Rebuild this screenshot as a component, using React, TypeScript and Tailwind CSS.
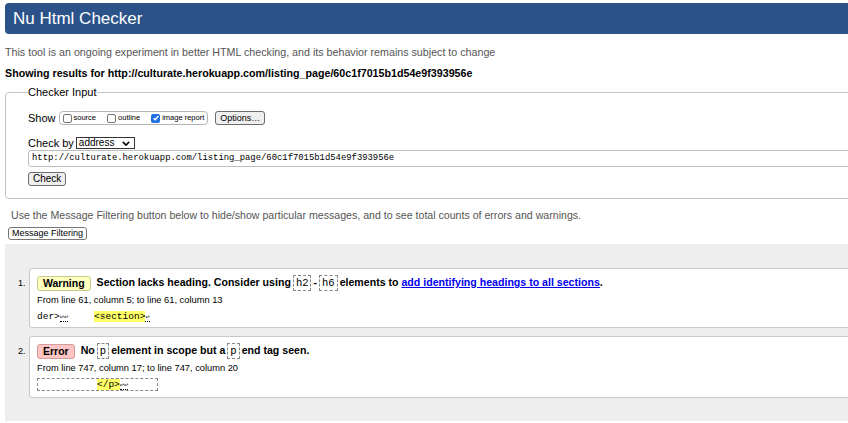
import React from 'react';

function Box({ checked }: { checked?: boolean }) {
  if (checked) {
    return (
      <span className="inline-flex h-[9px] w-[9px] items-center justify-center rounded-[2px] bg-[#1f6fe5]">
        <svg viewBox="0 0 10 10" className="h-[8px] w-[8px]" fill="none" stroke="white" strokeWidth={1.8}>
          <path d="M2 5.2l2 2L8 2.5" />
        </svg>
      </span>
    );
  }
  return <span className="inline-block h-[9px] w-[9px] rounded-[2px] border border-[#767676] bg-white" />;
}

function Code({ children }: { children: React.ReactNode }) {
  return (
    <code className="mx-[2px] inline-block border border-dashed border-[#888] px-[2px] font-['Liberation_Mono',monospace] text-[10.5px] font-normal leading-[14px]">
      {children}
    </code>
  );
}

function Ret({ n = 1 }: { n?: number }) {
  return (
    <span className="border-b border-dotted border-black text-[7px] leading-none">
      {'↩'.repeat(n)}
    </span>
  );
}

export default function App() {
  return (
    <div className="w-full overflow-hidden bg-white font-['Liberation_Sans',Arial,sans-serif] text-[11px] text-black">
      <div className="w-[880px]">
        <header className="ml-[5px] mt-[3px] flex h-[31px] items-center rounded-l-[4px] bg-[#2b5389] pl-[8px] text-[17px] text-white">
          Nu Html Checker
        </header>

        <p className="ml-[5px] mt-[12px] text-[10.7px] leading-[13px] text-[#555]">
          This tool is an ongoing experiment in better HTML checking, and its behavior remains subject to change
        </p>
        <p className="ml-[5px] mt-[8px] text-[10.7px] font-bold leading-[13px]">
          Showing results for http://culturate.herokuapp.com/listing_page/60c1f7015b1d54e9f393956e
        </p>

        <fieldset className="ml-[5px] mt-[5px] rounded-[4px] border border-[#c4c4c4] pb-[12px] pl-[22px]">
          <legend className="px-0 text-[11px] leading-[14px]">Checker Input</legend>

          <div className="mt-[12px] flex h-[14px] items-center">
            <span className="text-[11px] leading-none">Show</span>
            <span className="ml-[3px] flex h-[14px] items-center rounded-[4px] border border-[#b5b5b5] px-[3px] text-[7.5px]">
              <Box />
              <span className="ml-[2px] mr-[11px]">source</span>
              <Box />
              <span className="ml-[2px] mr-[11px]">outline</span>
              <Box checked />
              <span className="ml-[2px]">image report</span>
            </span>
            <button className="ml-[7px] h-[14px] rounded-[3px] border border-[#6b6b6b] bg-[#efefef] px-[4px] text-[9px] leading-[12px]">
              Options…
            </button>
          </div>

          <div className="mt-[12px] flex h-[12px] items-center">
            <span className="text-[11px] leading-none">Check by</span>
            <span className="ml-[2px] flex h-[12px] w-[59px] items-center justify-between border border-[#333] px-[2px] text-[10px] leading-none">
              address
              <svg viewBox="0 0 10 6" className="mr-[2px] h-[5px] w-[8px]" fill="none" stroke="black" strokeWidth={2}>
                <path d="M1 1l4 4 4-4" />
              </svg>
            </span>
          </div>

          <div className="mt-[1px] flex h-[17px] items-center rounded-l-[3px] border border-[#bdbdbd] pl-[3px] font-['Liberation_Mono',monospace] text-[8.9px]">
            http://culturate.herokuapp.com/listing_page/60c1f7015b1d54e9f393956e
          </div>

          <button className="mt-[5px] block h-[14px] rounded-[3px] border border-[#6b6b6b] bg-[#efefef] px-[4px] text-[10px] leading-[12px]">
            Check
          </button>
        </fieldset>

        <p className="ml-[11px] mt-[10px] text-[10.6px] leading-[12px] text-[#555]">
          Use the Message Filtering button below to hide/show particular messages, and to see total counts of errors and warnings.
        </p>
        <button className="ml-[8px] mt-[6px] block h-[13px] rounded-[3px] border border-[#777] bg-white px-[3px] text-[9px] leading-[11px]">
          Message Filtering
        </button>

        <div className="ml-[5px] mt-[4px] bg-[#eeeeee] pb-[23px] pt-[24px]">
          <ol className="flex flex-col gap-[8px] pl-[13px]">
            <li className="flex items-start">
              <span className="mt-[10px] w-[11px] text-[9px] leading-[11px]">1.</span>
              <div className="flex-1 rounded-[3px] border border-[#c8c8c8] bg-white pb-[4px] pl-[7px] pt-[6px]">
                <p className="flex h-[16px] items-center text-[10.6px] font-bold">
                  <span className="mr-[6px] rounded-[3px] border border-[#c9c98a] bg-[#ffffc0] px-[5px] text-[10.5px] leading-[13px]">
                    Warning
                  </span>
                  Section lacks heading. Consider using
                  <Code>h2</Code>-<Code>h6</Code>
                  elements to&nbsp;
                  <a className="text-[#0000ee] underline">add identifying headings to all sections</a>.
                </p>
                <p className="mt-[4px] text-[9.3px] leading-[11px]">From line 61, column 5; to line 61, column 13</p>
                <p className="mt-[4px] h-[13px] whitespace-pre font-['Liberation_Mono',monospace] text-[9.5px] leading-[13px]">
                  der&gt;<Ret n={2} />{'    '}
                  <mark className="ml-[3px] bg-[#ffff66]">&lt;section&gt;</mark>
                  <Ret />
                </p>
              </div>
            </li>
            <li className="flex items-start">
              <span className="mt-[10px] w-[11px] text-[9px] leading-[11px]">2.</span>
              <div className="flex-1 rounded-[3px] border border-[#c8c8c8] bg-white pb-[6px] pl-[7px] pt-[6px]">
                <p className="flex h-[16px] items-center text-[10.6px] font-bold">
                  <span className="mr-[6px] rounded-[3px] border border-[#d49a9a] bg-[#ffc4c4] px-[5px] text-[10.5px] leading-[13px]">
                    Error
                  </span>
                  No
                  <Code>p</Code>
                  element in scope but a
                  <Code>p</Code>
                  end tag seen.
                </p>
                <p className="mt-[4px] text-[9.3px] leading-[11px]">From line 747, column 17; to line 747, column 20</p>
                <p className="mt-[4px] h-[13px] w-[121px] whitespace-pre border border-dashed border-[#888] pl-[59px] font-['Liberation_Mono',monospace] text-[9.5px] leading-[11px]">
                  <mark className="bg-[#ffff66]">&lt;/p&gt;</mark>
                  <Ret n={2} />
                </p>
              </div>
            </li>
          </ol>
        </div>
      </div>
    </div>
  );
}
